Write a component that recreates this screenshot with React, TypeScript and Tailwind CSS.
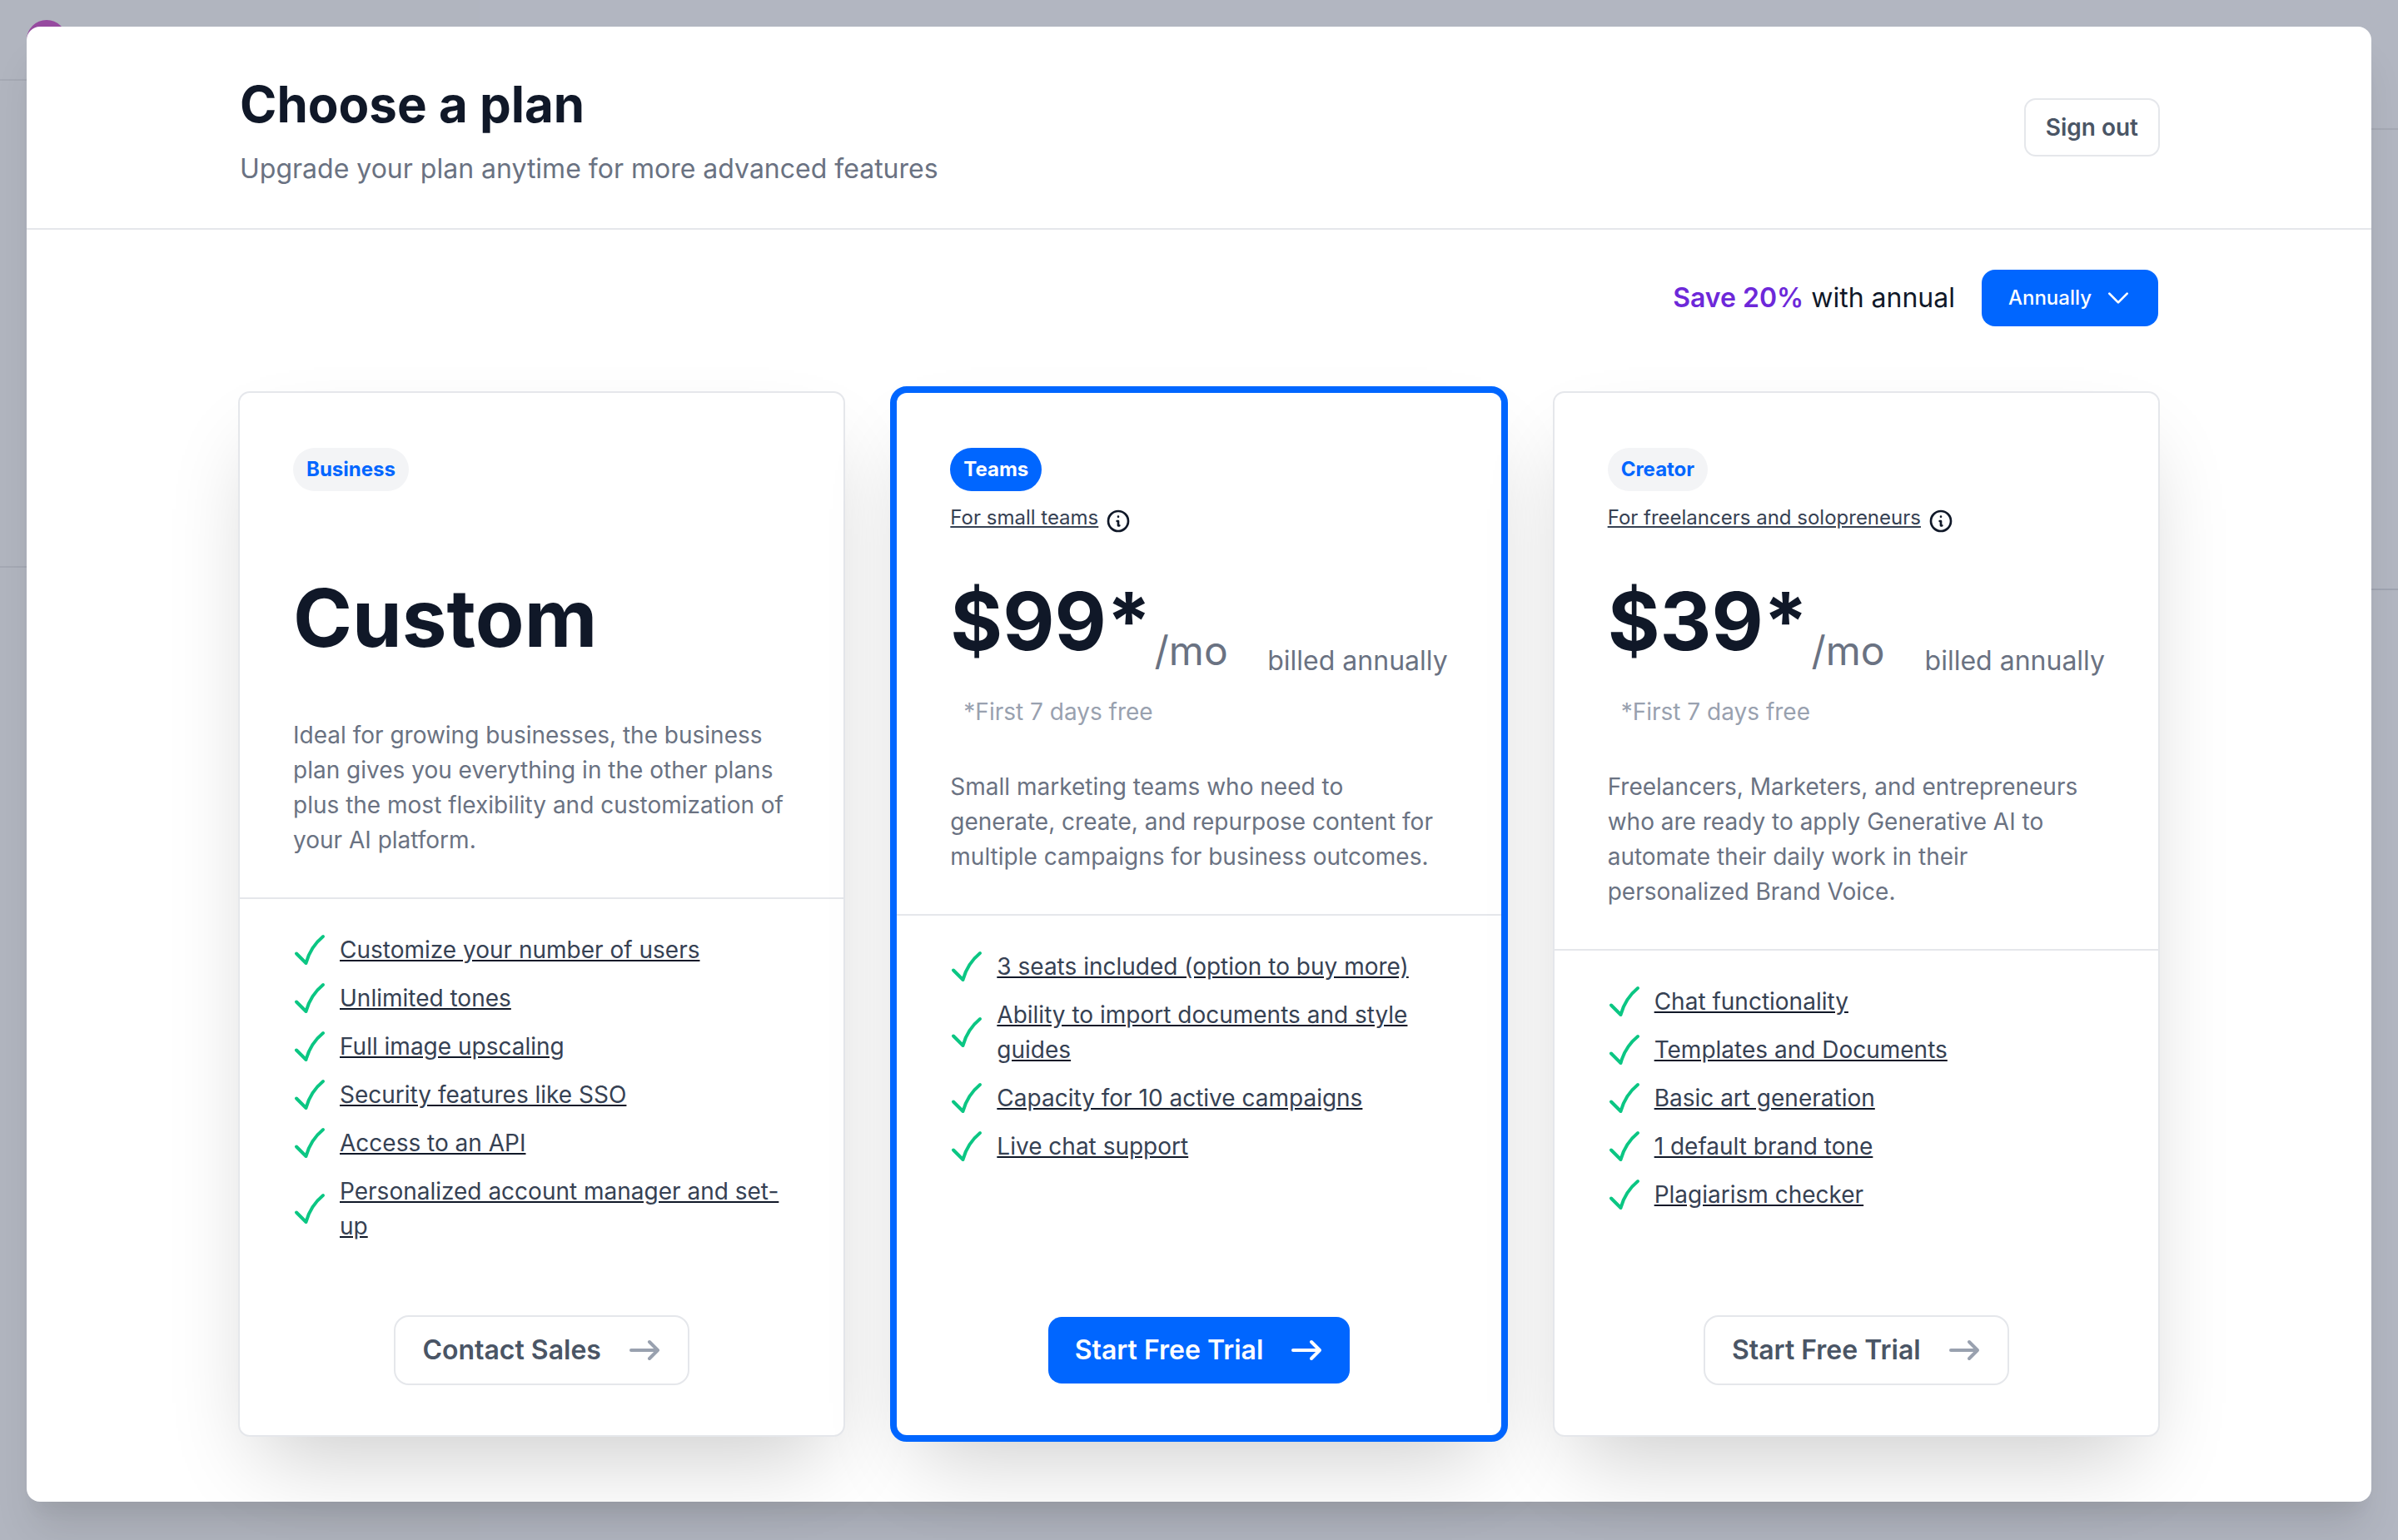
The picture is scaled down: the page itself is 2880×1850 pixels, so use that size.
import React from "react";

type Plan = {
  name: string;
  audience?: string;
  price: string;
  monthly: boolean;
  description: string;
  features: string[];
  action: string;
  highlighted: boolean;
};

const plans: Plan[] = [
  {
    name: "Business",
    price: "Custom",
    monthly: false,
    description:
      "Ideal for growing businesses, the business plan gives you everything in the other plans plus the most flexibility and customization of your AI platform.",
    features: [
      "Customize your number of users",
      "Unlimited tones",
      "Full image upscaling",
      "Security features like SSO",
      "Access to an API",
      "Personalized account manager and set-up",
    ],
    action: "Contact Sales",
    highlighted: false,
  },
  {
    name: "Teams",
    audience: "For small teams",
    price: "$99*",
    monthly: true,
    description:
      "Small marketing teams who need to generate, create, and repurpose content for multiple campaigns for business outcomes.",
    features: [
      "3 seats included (option to buy more)",
      "Ability to import documents and style guides",
      "Capacity for 10 active campaigns",
      "Live chat support",
    ],
    action: "Start Free Trial",
    highlighted: true,
  },
  {
    name: "Creator",
    audience: "For freelancers and solopreneurs",
    price: "$39*",
    monthly: true,
    description:
      "Freelancers, Marketers, and entrepreneurs who are ready to apply Generative AI to automate their daily work in their personalized Brand Voice.",
    features: [
      "Chat functionality",
      "Templates and Documents",
      "Basic art generation",
      "1 default brand tone",
      "Plagiarism checker",
    ],
    action: "Start Free Trial",
    highlighted: false,
  },
];

function CheckIcon() {
  return (
    <svg viewBox="0 0 40 40" className="size-10 shrink-0" fill="none" stroke="#0bc683" strokeWidth="4" strokeLinecap="round" strokeLinejoin="round" aria-hidden="true">
      <path d="M4 24.5 15.5 36C19 23 25 13 36 4" />
    </svg>
  );
}

function InfoIcon() {
  return (
    <svg viewBox="0 0 24 24" className="size-8 shrink-0" fill="none" stroke="currentColor" strokeWidth="2" strokeLinecap="round" strokeLinejoin="round" aria-hidden="true">
      <path d="M13 16h-1v-4h-1m1-4h.01M21 12a9 9 0 11-18 0 9 9 0 0118 0z" />
    </svg>
  );
}

function ArrowIcon() {
  return (
    <svg viewBox="0 0 24 24" className="size-12 shrink-0" fill="none" stroke="currentColor" strokeWidth="2" strokeLinecap="round" strokeLinejoin="round" aria-hidden="true">
      <path d="M4 12h16m0 0-5-5m5 5-5 5" />
    </svg>
  );
}

function PlanCard({ plan }: { plan: Plan }) {
  return (
    <article
      className={
        plan.highlighted
          ? "flex flex-col rounded-xl bg-white outline-8 outline-[#0066ff] shadow-[0_50px_100px_-24px_rgba(0,0,0,0.2)]"
          : "flex flex-col rounded-xl bg-white outline-2 outline-gray-200 shadow-[0_50px_100px_-24px_rgba(0,0,0,0.2)]"
      }
    >
      <div className="border-b-2 border-gray-200 px-16 pt-[66px] pb-12">
        <h2
          className={
            plan.highlighted
              ? "w-fit rounded-full bg-[#0066ff] px-4 text-[24px] leading-[52px] font-bold text-white"
              : "w-fit rounded-full bg-gray-100 px-4 text-[24px] leading-[52px] font-bold text-[#0066ff]"
          }
        >
          {plan.name}
        </h2>
        {plan.audience ? (
          <div className="mt-3 flex h-10 items-end gap-2">
            <a href="#" className="text-[24px] leading-10 text-gray-700 underline">{plan.audience}</a>
            <InfoIcon />
          </div>
        ) : (
          <div className="h-13" />
        )}
        {plan.monthly ? (
          <>
            <div className="mt-14 flex items-end text-gray-500">
              <span className="pb-6 text-[96px] leading-none font-bold text-gray-900">{plan.price}</span>
              <span className="mb-1 ml-1 text-[48px] leading-[64px]">/mo</span>
              <span className="ml-auto text-[32px] leading-[48px]">billed annually</span>
            </div>
            <p className="mt-4 ml-4 text-[28px] leading-[42px] text-gray-400">*First 7 days free</p>
            <p className="mt-12 text-[28px] leading-[42px] text-gray-500">{plan.description}</p>
          </>
        ) : (
          <>
            <p className="mt-13 text-[96px] leading-none font-bold text-gray-900">{plan.price}</p>
            <p className="mt-18 text-[28px] leading-[42px] text-gray-500">{plan.description}</p>
          </>
        )}
      </div>
      <div className="flex grow flex-col items-center justify-between px-16 pt-10 pb-[62px]">
        <ul className="flex w-full flex-col gap-4 text-[28px] leading-[42px]">
          {plan.features.map((feature) => (
            <li key={feature} className="flex items-center gap-4">
              <CheckIcon />
              <a href="#" className="text-gray-700 underline decoration-gray-900">{feature}</a>
            </li>
          ))}
        </ul>
        <button
          type="button"
          className={
            plan.highlighted
              ? "flex h-20 items-center gap-7 rounded-2xl bg-[#0066ff] pr-7 pl-8 text-[32px] font-semibold text-white"
              : "flex h-20 items-center gap-7 rounded-2xl bg-white pr-7 pl-8 text-[32px] font-semibold text-gray-600 outline-2 outline-gray-200"
          }
        >
          {plan.action}
          <span className={plan.highlighted ? "text-white" : "text-gray-400"}>
            <ArrowIcon />
          </span>
        </button>
      </div>
    </article>
  );
}

/* The dimmed application page that shows round the edges of the dialog. */
function Backdrop() {
  return (
    <div className="absolute inset-0 -z-10 flex" aria-hidden="true">
      <div className="flex w-1/5 flex-col">
        <div className="h-[97px] border-b-2 border-[#a5a9b4] px-8 pt-6">
          <div className="size-12 rounded-full bg-[#964a9f]" />
        </div>
        <div className="h-[585px] border-b-2 border-[#a5a9b4]" />
      </div>
      <div className="flex grow flex-col bg-[#b2b6c1]">
        <div className="h-[156px] border-b-2 border-[#a5a9b4]" />
        <div className="h-[553px] border-b-2 border-[#9fa4b1]" />
      </div>
    </div>
  );
}

export default function App() {
  return (
    <div className="relative isolate min-h-screen overflow-hidden bg-[#b1b5bf] p-8 pb-[46px] font-[Inter,sans-serif] text-gray-900">
      <Backdrop />
      <main className="rounded-2xl bg-white shadow-[0_40px_50px_-10px_rgba(0,0,0,0.1),0_20px_20px_-10px_rgba(0,0,0,0.04)]">
        <header className="border-b-2 border-gray-200">
          <div className="mx-auto flex h-[242px] max-w-[2304px] items-center justify-between">
            <div className="pt-[10px]">
              <h1 className="text-[60px] leading-[72px] font-bold">Choose a plan</h1>
              <p className="mt-[18px] text-[32px] leading-[48px] text-gray-500">Upgrade your plan anytime for more advanced features</p>
            </div>
            <button type="button" className="h-[66px] rounded-xl bg-white px-6 text-[28px] font-semibold text-gray-600 outline-2 outline-gray-200">
              Sign out
            </button>
          </div>
        </header>
        <section className="mx-auto max-w-[2304px] pt-12 pb-20">
          <div className="flex items-center justify-end gap-8">
            <p className="text-[32px] leading-[48px]">
              <strong className="font-semibold text-[#6d28d9]">Save 20%</strong> with annual
            </p>
            <button type="button" className="flex h-[68px] items-center gap-4 rounded-2xl bg-[#0066ff] px-8 text-[24px] font-medium text-white">
              Annually
              <svg viewBox="0 0 24 24" className="size-8" fill="none" stroke="currentColor" strokeWidth="2" strokeLinecap="round" strokeLinejoin="round" aria-hidden="true">
                <path d="m4 8 8 8 8-8" />
              </svg>
            </button>
          </div>
          <div className="mt-20 grid min-h-[1252px] grid-cols-3 gap-16">
            {plans.map((plan) => (
              <PlanCard key={plan.name} plan={plan} />
            ))}
          </div>
        </section>
      </main>
    </div>
  );
}
